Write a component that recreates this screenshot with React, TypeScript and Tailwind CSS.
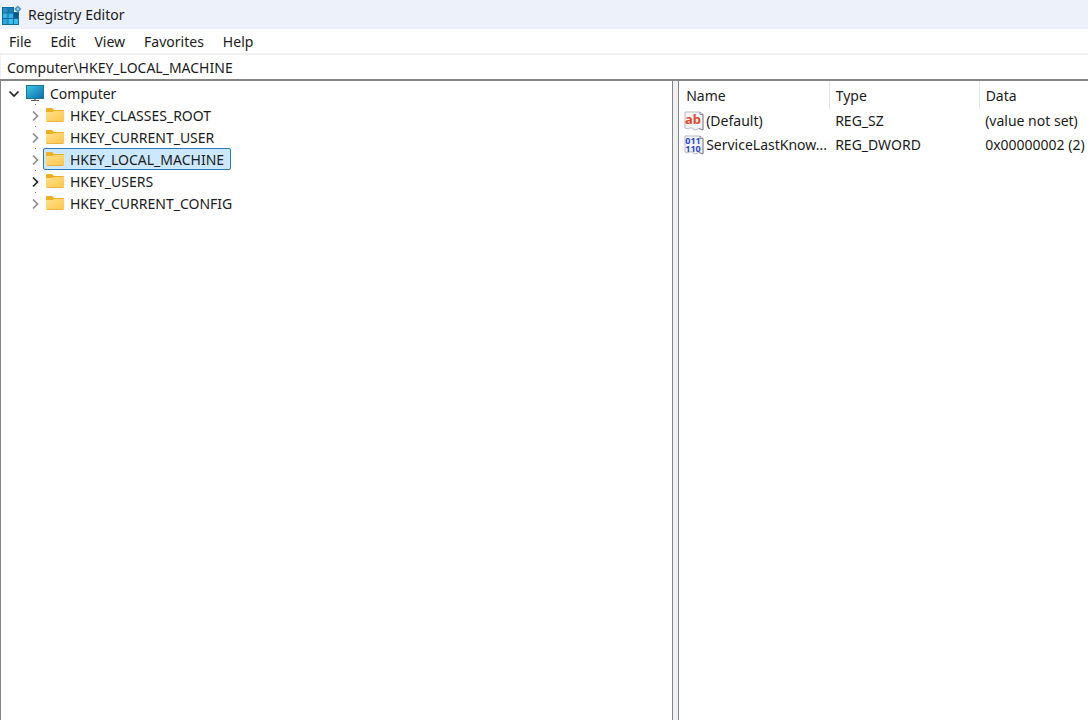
const menus = ["File", "Edit", "View", "Favorites", "Help"];

const hives = [
  { name: "HKEY_CLASSES_ROOT" },
  { name: "HKEY_CURRENT_USER" },
  { name: "HKEY_LOCAL_MACHINE", selected: true },
  { name: "HKEY_USERS", active: true },
  { name: "HKEY_CURRENT_CONFIG" },
];

const values = [
  { name: "(Default)", type: "REG_SZ", data: "(value not set)", binary: false },
  { name: "ServiceLastKnow...", type: "REG_DWORD", data: "0x00000002 (2)", binary: true },
];

function RegistryIcon() {
  return (
    <svg width="20" height="20" viewBox="0 0 20 20" aria-hidden="true">
      <path d="M0 2h12v5h5v13H0z" fill="#0f6c9e" />
      <path d="M1 3h4.5v4.5H1z" fill="#2592c6" />
      <path d="M6.5 3H11v4.5H6.5z" fill="#1b7fb3" />
      <path d="M12 8h4v4.5h-4z" fill="#0c5584" />
      <path d="M1 8.5h4.5V13H1zM6.5 8.5H11V13H6.5z" fill="#35b4e6" />
      <path d="M1 14h4.5v5H1z" fill="#2fa6db" />
      <path d="M6.5 14H11v5H6.5zM12 14h4v5h-4z" fill="#3bbdf0" />
      <path d="M15.8 0.5l3.7 3.6-3.7 3.7-3.7-3.7z" fill="#4a97bd" />
      <path d="M15.8 2.6l1.6 1.5-1.6 1.7-1.6-1.7z" fill="#8acbe4" />
    </svg>
  );
}

function ComputerIcon() {
  return (
    <svg width="18" height="17" viewBox="0 0 18 17" aria-hidden="true">
      <defs>
        <linearGradient id="screen" x1="0" y1="0" x2="1" y2="1">
          <stop offset="0" stopColor="#38cbdf" />
          <stop offset="1" stopColor="#0f69b0" />
        </linearGradient>
      </defs>
      <rect x="0.5" y="0.5" width="17" height="13" fill="url(#screen)" stroke="#1d7295" />
      <path d="M8 14h2v1H8z" fill="#8a9299" />
      <path d="M5 15h8v1H5z" fill="#59636b" />
    </svg>
  );
}

function FolderIcon() {
  return (
    <svg width="18" height="14" viewBox="0 0 18 14" aria-hidden="true">
      <defs>
        <linearGradient id="folder" x1="0" y1="0" x2="1" y2="1">
          <stop offset="0" stopColor="#ffe08a" />
          <stop offset="1" stopColor="#fbc547" />
        </linearGradient>
      </defs>
      <path d="M0 1q0-1 1-1h5l2 2h9q1 0 1 1v4H0z" fill="#f0ae1c" />
      <path d="M0 4h6l2-1h10v10q0 1-1 1H1q-1 0-1-1z" fill="url(#folder)" />
      <path d="M1 13.5h16" stroke="#ecb344" />
    </svg>
  );
}

function Chevron({ open = false, dark = false }: { open?: boolean; dark?: boolean }) {
  return (
    <svg width="12" height="12" viewBox="0 0 12 12" fill="none" aria-hidden="true">
      <path
        d={open ? "M1.5 4.5l4.5 4.5L10.5 4.5" : "M4 1.5l4.5 4.5L4 10.500"}
        stroke={dark ? "#222222" : "#8c8c8c"}
        strokeWidth="1.7"
      />
    </svg>
  );
}

function ValueIcon({ binary }: { binary: boolean }) {
  return (
    <svg
      width="20"
      height="20"
      viewBox="0 0 20 20"
      className="shrink-0 overflow-visible leading-none font-bold"
      aria-hidden="true"
    >
      <path d="M1 1h15l3 2v16l-4-1.5-4 1.5-4-2.5-3 1.500-3-1z" fill="#f3f4f8" stroke="#b9bbc2" />
      <path d="M16 1v2.5h3V19l-4-1.500" fill="none" stroke="#8b8d94" />
      {binary ? (
        <g fill="#2b49cf" fontSize="9" textAnchor="middle">
          <text x="9" y="9">
            011
          </text>
          <text x="9" y="17">
            110
          </text>
        </g>
      ) : (
        <text x="9" y="13" textAnchor="middle" fontSize="13" fill="#dc4a30">
          ab
        </text>
      )}
    </svg>
  );
}

export default function App() {
  return (
    <div className="flex min-h-screen flex-col bg-white font-['Noto_Sans','Open_Sans',sans-serif] text-[14px] leading-5 text-[#1b1b1b]">
      <header className="flex h-[29px] items-center gap-1.5 bg-[#edf2fa] pl-0.5">
        <RegistryIcon />
        <h1>Registry Editor</h1>
      </header>

      <nav className="flex h-6 items-center gap-px pt-0.5">
        {menus.map((menu) => (
          <button key={menu} type="button" className="px-[9px]">
            {menu}
          </button>
        ))}
      </nav>

      <div className="h-[26px] border-t-2 border-l border-[#f0f0f0]">
        <input
          aria-label="Address"
          defaultValue="Computer\HKEY_LOCAL_MACHINE"
          className="h-full w-full px-1.5 outline-none"
        />
      </div>

      <main className="flex grow border-t-2 border-[#858585]">
        <section className="flex-[673] border-x border-[#858585] pt-px">
          <div className="flex h-[22px] items-center pl-[7px]">
            <button type="button" aria-label="Collapse Computer" className="mr-1.5">
              <Chevron open dark />
            </button>
            <ComputerIcon />
            <span className="ml-1.5 pt-0.5">Computer</span>
          </div>
          <ul>
            {hives.map((hive) => (
              <li key={hive.name} className="flex h-[22px] items-center pl-7">
                <button
                  type="button"
                  aria-label={`Expand ${hive.name}`}
                  className="flex h-full flex-col items-center"
                >
                  <span className="h-px w-px bg-[#777777]" />
                  <span className="flex grow items-center">
                    <Chevron dark={hive.active} />
                  </span>
                </button>
                <button
                  type="button"
                  className={
                    hive.selected
                      ? "ml-0.5 flex h-full items-center gap-1.5 rounded-xs border border-[#2a7ab9] bg-[#cce8ff] pr-1.5 pl-0.5"
                      : "ml-0.5 flex h-full items-center gap-1.5 border border-transparent pr-1.5 pl-0.5"
                  }
                >
                  <FolderIcon />
                  <span className="pt-0.5">{hive.name}</span>
                </button>
              </li>
            ))}
          </ul>
        </section>

        <div className="w-[5px] bg-[#f0f1f3]" />

        <section className="min-w-0 flex-[410] overflow-hidden border-l border-[#858585]">
          <table className="w-full table-fixed text-left whitespace-nowrap">
            <thead>
              <tr className="h-7">
                <th className="w-[150px] border-r border-[#e5e5e5] pt-0.5 pl-[7px] font-normal">Name</th>
                <th className="w-[150px] border-r border-[#e5e5e5] pt-0.5 pl-1.5 font-normal">Type</th>
                <th className="pt-0.5 pl-1.5 font-normal">Data</th>
              </tr>
            </thead>
            <tbody>
              {values.map((value) => (
                <tr key={value.name} className="h-6">
                  <td className="pl-[5px]">
                    <div className="flex items-center gap-0.5">
                      <ValueIcon binary={value.binary} />
                      {value.name}
                    </div>
                  </td>
                  <td className="pl-1.5">{value.type}</td>
                  <td className="pl-1.5">{value.data}</td>
                </tr>
              ))}
            </tbody>
          </table>
        </section>
      </main>
    </div>
  );
}
